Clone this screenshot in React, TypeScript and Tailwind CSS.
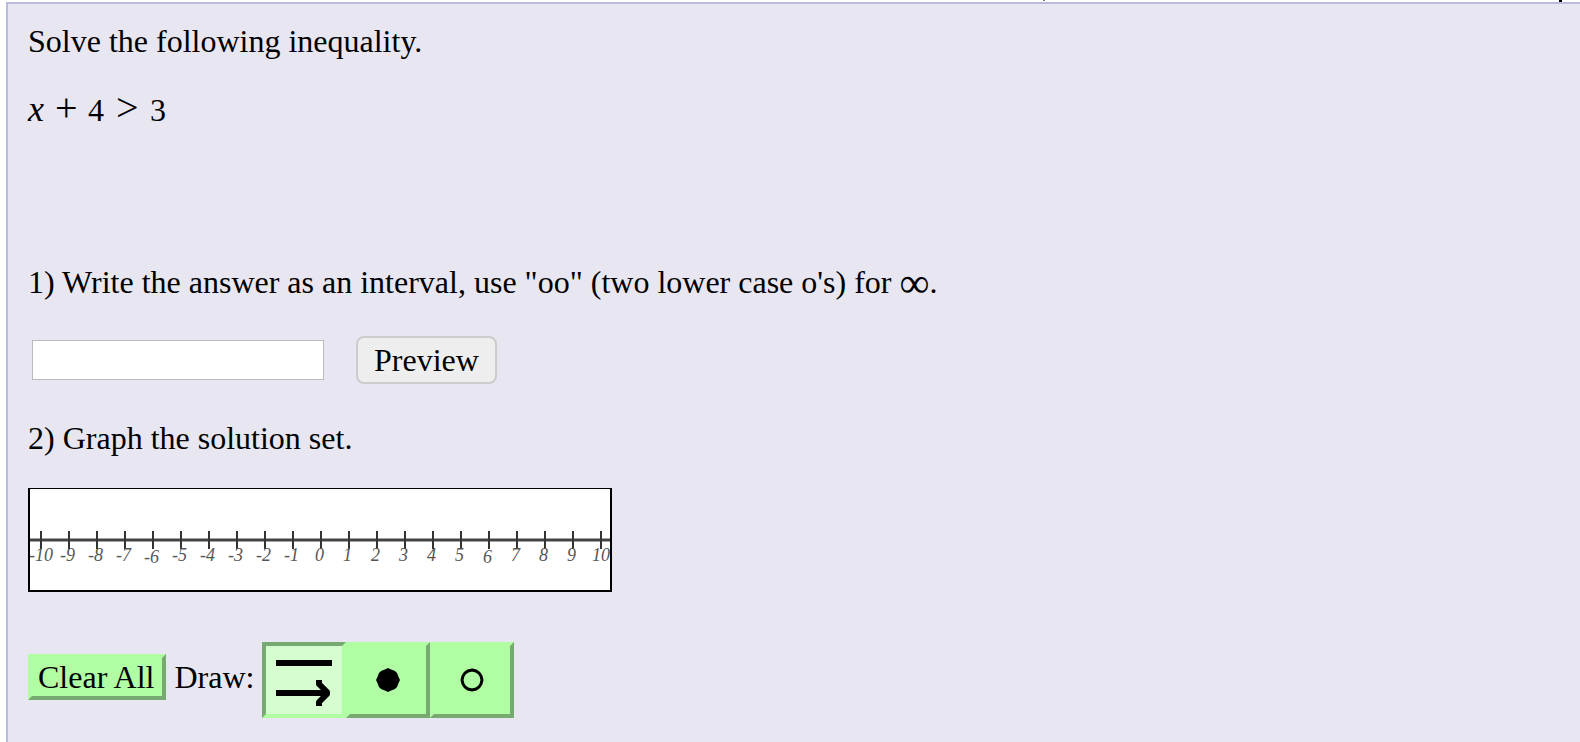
type TickProps = {
  value: number
}

const ticks = Array.from({ length: 21 }, (_, i) => i - 10)

const labelOffset = (value: number) => {
  if (value === -10) return -12
  if (value === 10) return -9
  return value < 0 ? -9 : -6
}

const Tick = ({ value }: TickProps) => {
  const x = 11 + (value + 10) * 28
  return (
    <g>
      <line x1={x} x2={x} y1={42} y2={60} stroke="#333333" strokeWidth={2} />
      <text
        x={x + labelOffset(value)}
        y={value === 6 || value === -6 ? 74 : 72}
        fontSize={18}
        fill="#555555"
      >
        {value}
      </text>
    </g>
  )
}

const NumberLine = () => {
  return (
    <svg
      width={580}
      height={101}
      viewBox="0 0 580 101"
      className="block italic"
      role="img"
      aria-label="Number line from -10 to 10"
    >
      <line x1={0} x2={580} y1={51} y2={51} stroke="#444444" strokeWidth={3} />
      {ticks.map((value) => (
        <Tick key={value} value={value} />
      ))}
    </svg>
  )
}

const LineIcon = () => (
  <svg width={76} height={68} viewBox="0 0 76 68" fill="none" stroke="#000000" strokeWidth={6}>
    <path d="M10 17H66M10 47H61" />
    <path d="M53 34V38L61 46V48L53 56V60" strokeLinejoin="round" />
  </svg>
)

const ClosedDotIcon = () => (
  <svg width={76} height={68} viewBox="0 0 76 68">
    <path d="M36 23L38 22L40 23L45 25L47 27L49 32L50 34L49 36L47 41L45 43L40 45L38 46L36 45L31 43L29 41L27 36L26 34L27 32L29 27L31 25Z" />
  </svg>
)

const OpenDotIcon = () => (
  <svg width={76} height={68} viewBox="0 0 76 68">
    <path
      d="M38 24L42 25L45 27L47 30L48 34L47 38L45 41L42 43L38 44L34 43L31 41L29 38L28 34L29 30L31 27L34 25Z"
      fill="none"
      stroke="#000000"
      strokeWidth={3}
    />
  </svg>
)

const App = () => {
  return (
    <div className="flex min-h-screen flex-col overflow-hidden bg-white pl-[6px] font-['Liberation_Serif',serif] text-[32px] leading-[36px] text-black">
      <div className="flex h-[2px] justify-end gap-[514px] pr-[18px]">
        <span className="h-px w-[2px] bg-[#777777]"></span>
        <span className="w-[3px] bg-black"></span>
      </div>

      <main className="flex-1 border-t-2 border-l-2 border-[#bbbbdd] bg-[#e8e6f1] pt-[19px] pl-5">
        <p>Solve the following inequality.</p>

        <p className="mt-[31px] flex items-baseline">
          <i className="w-[27px] text-[36px]">x</i>
          <span className="w-[33px] text-[40px]">+</span>
          <span className="w-[28px]">4</span>
          <span className="w-[34px] text-[40px]">&gt;</span>
          <span>3</span>
        </p>

        <label htmlFor="interval" className="mt-[136px] block">
          1) Write the answer as an interval, use "oo" (two lower case o's) for{' '}
          <span className="align-[-4px] text-[42px] leading-[0px]">∞</span>.
        </label>

        <div className="mt-9 flex items-center gap-8 pl-1">
          <input
            id="interval"
            type="text"
            className="h-10 w-[292px] border border-[#bbbbbb] bg-white px-1 outline-none"
          />
          <button className="h-12 rounded-lg border-2 border-[#cccccc] bg-[#eeeeee] px-4 leading-[34px]">
            Preview
          </button>
        </div>

        <p className="mt-9">2) Graph the solution set.</p>

        <div className="mt-8 w-[584px] border-2 border-t border-black bg-white">
          <NumberLine />
        </div>

        <div className="mt-[50px] flex items-center">
          <div className="flex items-center pb-[6px]">
            <button className="h-[46px] border-4 border-t-[#b0fda4] border-r-[#77aa70] border-b-[#77aa70] border-l-[#b0fda4] bg-[#b0fda4] pr-2 pl-[6px]">
              Clear All
            </button>
            <span className="ml-2">Draw:</span>
          </div>
          <div className="ml-2 flex">
            <button
              aria-label="Line or ray"
              className="border-4 border-t-[#77aa70] border-r-[#b0fda4] border-b-[#b0fda4] border-l-[#77aa70] bg-[#d5fdd0]"
            >
              <LineIcon />
            </button>
            <button
              aria-label="Closed dot"
              className="border-4 border-t-[#b0fda4] border-r-[#77aa70] border-b-[#77aa70] border-l-[#b0fda4] bg-[#b0fda4]"
            >
              <ClosedDotIcon />
            </button>
            <button
              aria-label="Open dot"
              className="border-4 border-t-[#b0fda4] border-r-[#77aa70] border-b-[#77aa70] border-l-[#b0fda4] bg-[#b0fda4]"
            >
              <OpenDotIcon />
            </button>
          </div>
        </div>
      </main>
    </div>
  )
}

export default App
